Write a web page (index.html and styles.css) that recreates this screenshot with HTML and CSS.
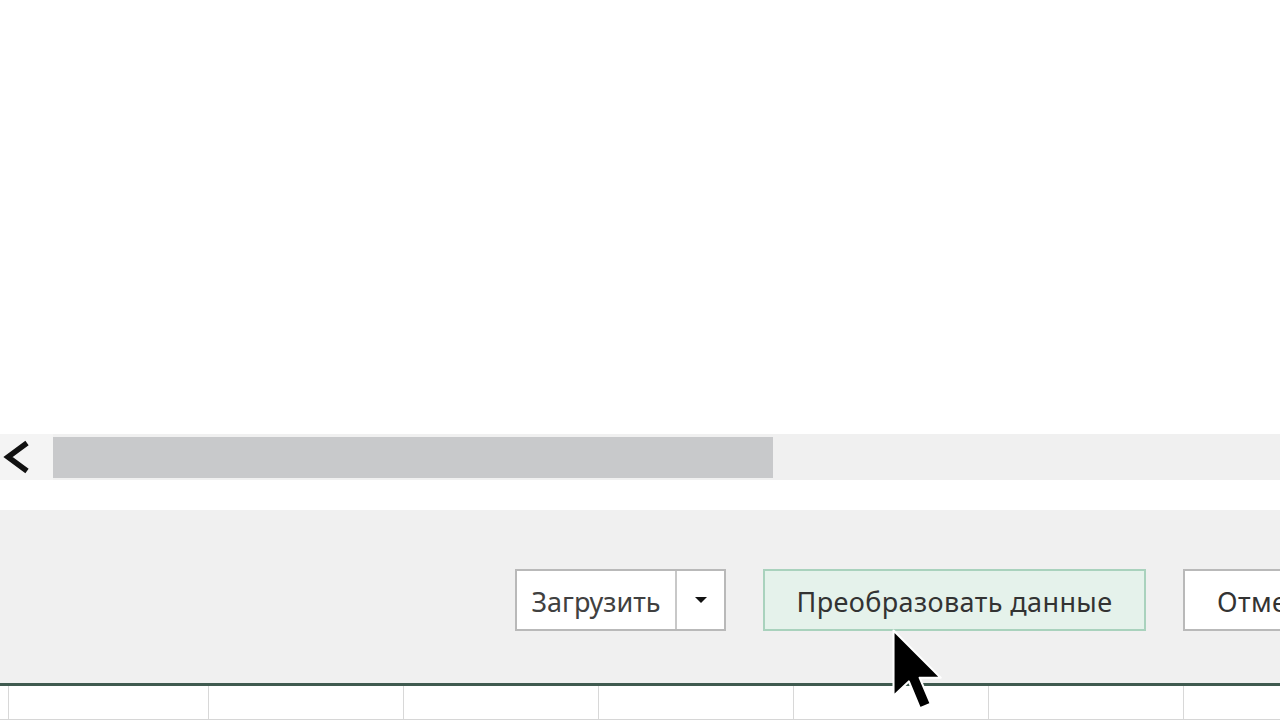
FILE: index.html
```html
<!DOCTYPE html>
<html>
<head>
  <title>Предварительный просмотр</title>
  <meta charset="UTF-8">
  <meta name="viewport" content="width=device-width, initial-scale=1.0">
  <link rel="stylesheet" href="styles.css">
</head>
<body>
  <div class="preview"></div>
  <div class="hscroll">
    <div class="scroll-arrow">
      <svg width="32" height="36" viewBox="0 0 32 36"><path d="M27 4 L8 18 L27 32" fill="none" stroke="#111" stroke-width="5.5"/></svg>
    </div>
    <div class="scroll-thumb"></div>
  </div>
  <div class="spacer"></div>
  <div class="footer">
    <div class="split-btn">
      <div class="btn-main">Загрузить</div>
      <div class="btn-drop"><span class="caret"></span></div>
    </div>
    <div class="btn primary">Преобразовать данные</div>
    <div class="btn">Отмена</div>
  </div>
  <div class="sheet-line"></div>
  <div class="sheet-row">
    <div class="cell first"></div>
    <div class="cell"></div>
    <div class="cell"></div>
    <div class="cell"></div>
    <div class="cell"></div>
    <div class="cell"></div>
    <div class="cell"></div>
  </div>
  <svg class="cursor" width="58" height="89" viewBox="0 0 14 21.5">
    <path d="M0.6 0.6 L0.6 16.4 L4.3 12.9 L7 19.4 L9.6 18.3 L6.9 12 L12 12 Z" fill="#000" stroke="#fff" stroke-width="0.5" stroke-linejoin="round"/>
  </svg>
</body>
</html>
```
FILE: styles.css
```css
body {
  margin: 0;
  background: #fff;
  font-family: "Noto Sans", "Open Sans", sans-serif;
  overflow: hidden;
  height: 720px;
  position: relative;
}
.preview {
  height: 434px;
}
.hscroll {
  height: 46px;
  display: flex;
  background-color: #f0f0f0;
}
.scroll-arrow {
  width: 53px;
  display: flex;
  align-items: center;
  background-color: #f4f4f4;
}
.scroll-thumb {
  width: 720px;
  margin: 3px 0 2px;
  background-color: #c8c9cb;
}
.spacer {
  height: 30px;
}
.footer {
  height: 173px;
  box-sizing: border-box;
  background-color: #f0f0f0;
  display: flex;
  align-items: flex-start;
  padding: 59px 0 0 515px;
  gap: 37px;
  white-space: nowrap;
}
.split-btn {
  display: flex;
  flex-shrink: 0;
  height: 62px;
  border: 2px solid #b9b9b9;
  box-sizing: border-box;
  background: #fff;
}
.btn-main {
  width: 160px;
  display: flex;
  align-items: center;
  justify-content: center;
  padding-top: 3px;
  box-sizing: border-box;
  font-size: 27px;
  color: #404040;
  border-right: 2px solid #c8c8c8;
}
.btn-drop {
  width: 47px;
  display: flex;
  align-items: center;
  justify-content: center;
}
.caret {
  width: 0;
  height: 0;
  border-left: 6px solid transparent;
  border-right: 6px solid transparent;
  border-top: 6px solid #111;
}
.btn {
  flex-shrink: 0;
  height: 62px;
  box-sizing: border-box;
  border: 2px solid #b9b9b9;
  background: #fff;
  padding: 3px 32px 0;
  display: flex;
  align-items: center;
  font-size: 27px;
  letter-spacing: 0.4px;
  color: #333;
}
.btn.primary {
  width: 383px;
  justify-content: center;
  background-color: #e5f2eb;
  border-color: #a9d2bd;
}
.sheet-line {
  height: 3px;
  background-color: #3f5a4f;
}
.sheet-row {
  height: 33px;
  display: flex;
  border-bottom: 2px solid #d6d6d6;
  padding-left: 8px;
}
.cell {
  width: 195px;
  flex-shrink: 0;
  box-sizing: border-box;
  border-left: 1px solid #d8d8d8;
}
.cell.first {
  width: 200px;
}
.cursor {
  position: absolute;
  left: 891px;
  top: 628px;
}
```
